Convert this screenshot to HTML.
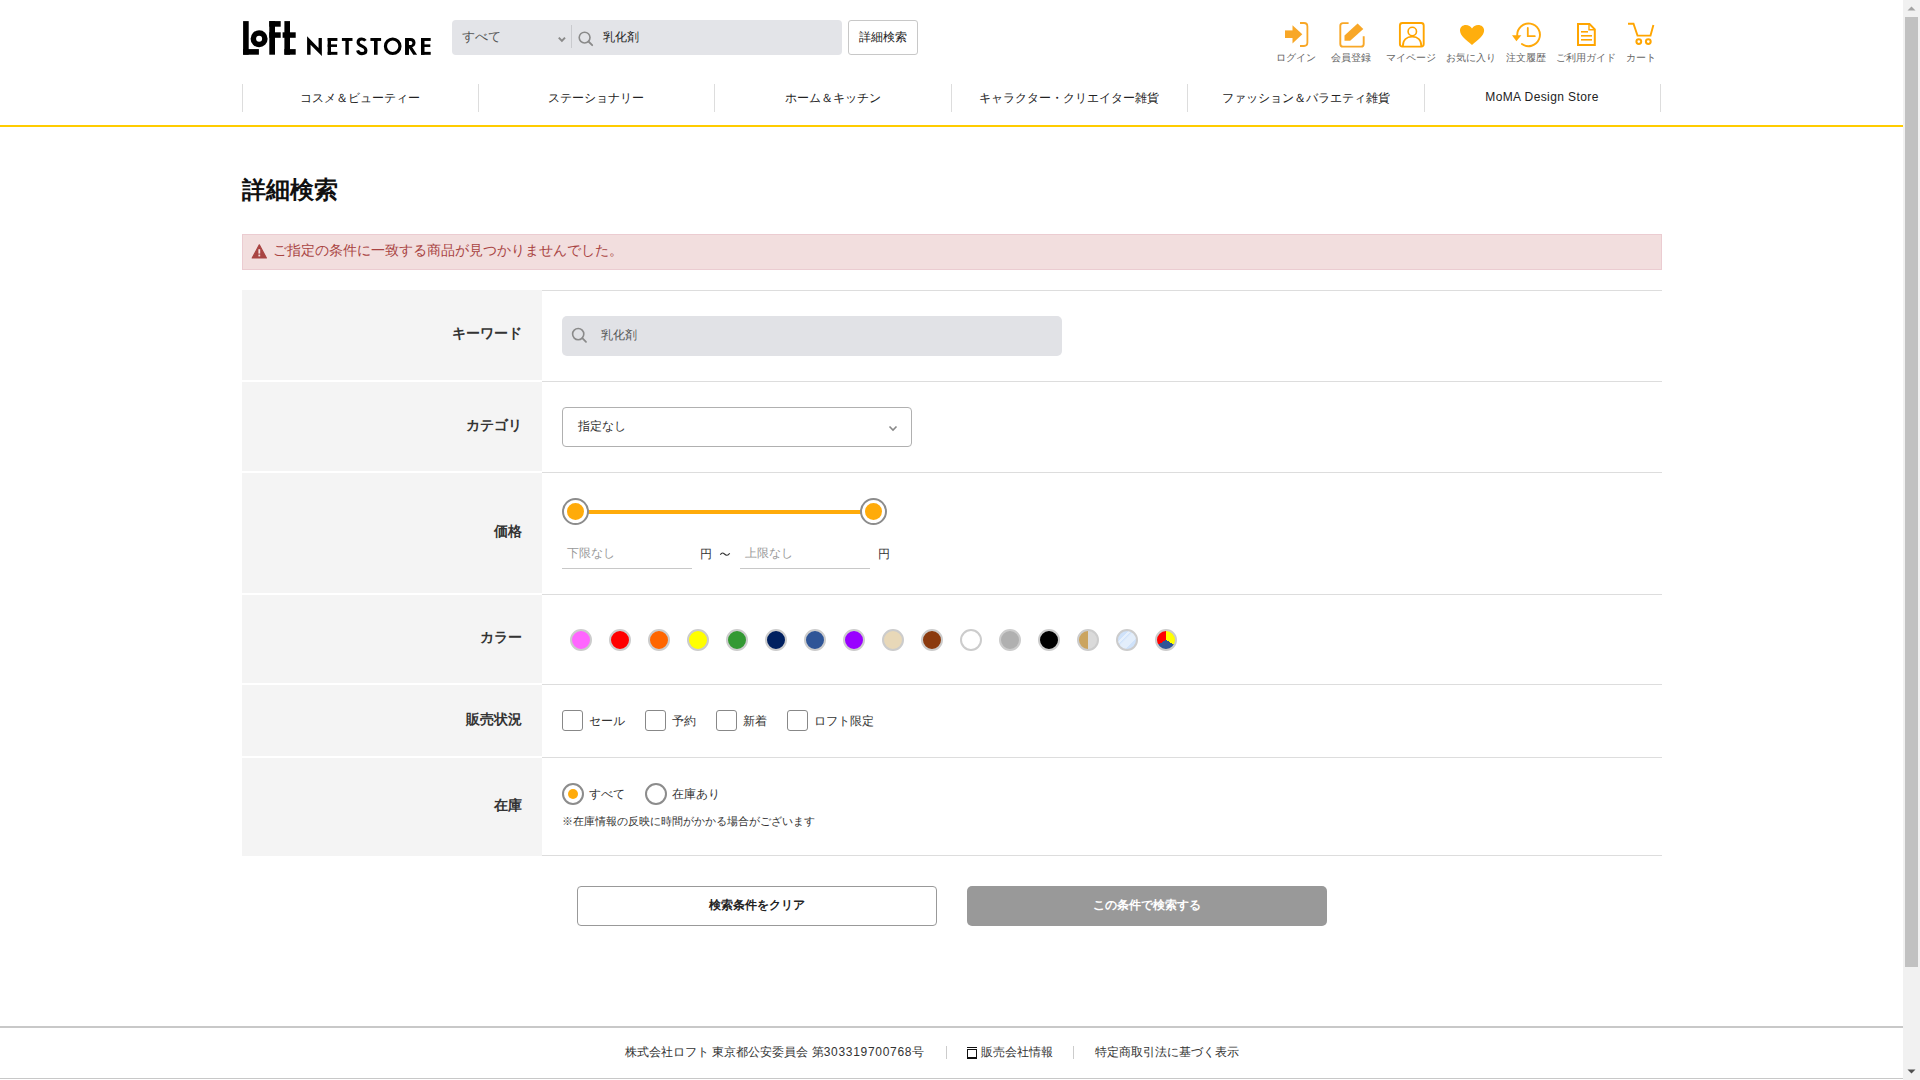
<!DOCTYPE html>
<html lang="ja">
<head>
<meta charset="utf-8">
<title>詳細検索 | ロフト公式通販サイト</title>
<style>
*{box-sizing:border-box;margin:0;padding:0}
html,body{width:1920px;height:1080px;overflow:hidden;background:#fff}
body{font-family:"Liberation Sans",sans-serif;color:#222;position:relative}
.abs{position:absolute}
.t{position:absolute;white-space:nowrap;line-height:1}
/* scrollbar */
#sb{position:absolute;left:1903px;top:0;width:17px;height:1080px;background:#f1f1f1}
#sb .thumb{position:absolute;left:2px;top:17px;width:13px;height:950px;background:#c1c1c1}
/* header */
.sbox{left:452px;top:20px;width:390px;height:35px;background:#e3e4e8;border-radius:4px}
.dbtn{left:848px;top:20px;width:70px;height:35px;border:1px solid #c8c8c8;border-radius:3px;background:#fff}
.icolbl{top:53px;font-size:10px;color:#666;text-align:center;width:80px}
.nav{top:84px;height:28px;width:1px;background:#ddd}
.navt{top:92px;font-size:12px;color:#222;text-align:center;width:236px}
.yline{left:0;top:125px;width:1903px;height:2px;background:#ffcc00}
/* table */
.lab{left:242px;width:300px;background:#f4f4f4}
.hl{left:542px;width:1120px;height:1px;background:#dddddd}
.lt{font-size:14px;font-weight:bold;color:#333;right:1398px;text-align:right}
.sw{position:absolute;top:629px;width:22px;height:22px;border-radius:50%;border:2px solid #cccccc}
.cb{position:absolute;top:710px;width:21px;height:21px;border:1px solid #888;border-radius:3px;background:#fff}
.ct{top:715px;font-size:12px;color:#333}
</style>
</head>
<body>
<!-- ===== HEADER ===== -->
<svg class="abs" style="left:0;top:0" width="440" height="70" viewBox="0 0 440 70">
  <g fill="#000">
    <rect x="243.1" y="21.1" width="5.6" height="33.6"/>
    <rect x="243.1" y="49.1" width="15.8" height="5.6"/>
    <circle cx="259.1" cy="38.8" r="8.5"/>
    <rect x="269.3" y="21.1" width="5.7" height="33.6"/>
    <rect x="269.3" y="21.1" width="11.4" height="5.6"/>
    <rect x="269.3" y="32.3" width="11.4" height="5.5"/>
    <rect x="284.4" y="21.1" width="5.6" height="33.6"/>
    <rect x="282.6" y="32.3" width="13.1" height="5.5"/>
    <rect x="284.4" y="49.1" width="11.3" height="5.6"/>
  </g>
  <circle cx="259.1" cy="38.8" r="3.0" fill="#fff"/>
  <g fill="#000">
    <polygon points="307.1,36.37 307.1,54.79 310.56,54.79 310.56,44.76 321.86,55.88 321.86,38.02 318.58,38.02 318.58,48.04"/>
    <rect x="327.7" y="38.02" width="3.3" height="16.77"/>
    <rect x="327.7" y="38.02" width="9.7" height="2.92"/>
    <rect x="327.7" y="44.4" width="9.3" height="2.55"/>
    <rect x="327.7" y="51.87" width="9.7" height="2.92"/>
    <rect x="341.9" y="38.02" width="10.6" height="2.92"/>
    <rect x="345.4" y="38.02" width="3.4" height="16.77"/>
    <rect x="370.4" y="38.02" width="10.7" height="2.92"/>
    <rect x="374" y="38.02" width="3.6" height="16.77"/>
    <rect x="405.2" y="38.02" width="3.6" height="16.77"/>
    <path fill-rule="evenodd" d="M405.2 38.02 H410.5 C413.6 38.02 415.5 40 415.5 42.7 C415.5 45 414.2 46.6 412.2 47.2 L417.1 54.79 H413.3 L408.9 47.9 V54.79 H405.2 Z M408.8 40.9 V45 H410.2 C411.6 45 412.4 44.1 412.4 42.95 C412.4 41.8 411.6 40.9 410.2 40.9 Z"/>
    <rect x="421" y="38.02" width="3.5" height="16.77"/>
    <rect x="421" y="38.02" width="9.7" height="2.92"/>
    <rect x="421" y="44.4" width="9.3" height="2.55"/>
    <rect x="421" y="51.87" width="9.7" height="2.92"/>
  </g>
  <path d="M365.4 40.8 C364.6 39.5 363.3 39 361.8 39 C359.6 39 358.1 40.4 358.1 42.3 C358.1 44.4 360 45.3 362 46.2 C364.3 47.2 365.9 48.4 365.9 50.5 C365.9 52.7 364.1 53.6 361.9 53.6 C359.6 53.6 358.1 52.3 357.6 50.3" fill="none" stroke="#000" stroke-width="3.1"/>
  <circle cx="392.7" cy="46.25" r="7.25" fill="none" stroke="#000" stroke-width="3.2"/>
</svg>

<div class="abs sbox"></div>
<div class="t" style="left:462px;top:31px;font-size:12.5px;color:#555">すべて</div>
<svg class="abs" style="left:556px;top:34px" width="12" height="10" viewBox="0 0 12 10"><path d="M2.8 3.6 L5.9 6.9 L9 3.6" fill="none" stroke="#8a8a8a" stroke-width="2"/></svg>
<div class="abs" style="left:571px;top:25px;width:1px;height:23px;background:#c9cace"></div>
<svg class="abs" style="left:576px;top:29px" width="20" height="20" viewBox="0 0 20 20"><circle cx="8.6" cy="8.6" r="5.4" fill="none" stroke="#8a8a8a" stroke-width="1.6"/><path d="M12.5 12.5 L16.2 16.2" stroke="#8a8a8a" stroke-width="1.8" stroke-linecap="round"/></svg>
<div class="t" style="left:603px;top:31px;font-size:12px;color:#222">乳化剤</div>

<div class="abs dbtn"></div>
<div class="t" style="left:859px;top:31px;font-size:12px;color:#222">詳細検索</div>

<!-- header icons -->
<svg class="abs" style="left:1270px;top:14px" width="400" height="40" viewBox="1270 14 400 40">
  <g fill="#f8a727">
    <rect x="1285" y="30.4" width="9" height="7.6"/>
    <polygon points="1292.5,25.2 1302.3,34.2 1292.5,43.5"/>
  </g>
  <path d="M1300 23 H1304 Q1307.4 23 1307.4 26.4 V42.6 Q1307.4 46 1304 46 H1300" fill="none" stroke="#f8a727" stroke-width="1.8"/>
  <path d="M1348.6 23.1 H1343 Q1340.3 23.1 1340.3 25.8 V43.9 Q1340.3 46.6 1343 46.6 H1361 Q1363.7 46.6 1363.7 43.9 V36.2" fill="none" stroke="#f8a727" stroke-width="1.9"/>
  <polygon points="1344.5,35.6 1357.6,23.4 1363.3,29 1350.2,40.7 1344.5,40.7" fill="#f8a727"/>
  <rect x="1399.9" y="23" width="23.8" height="23.6" rx="2.5" fill="none" stroke="#ffa500" stroke-width="1.9"/>
  <circle cx="1412.3" cy="31.5" r="4.2" fill="none" stroke="#ffa500" stroke-width="1.6"/>
  <path d="M1402.9 46 C1402.9 40 1406.6 36.6 1412.2 36.6 C1417.8 36.6 1421.3 40 1421.3 46" fill="none" stroke="#ffa500" stroke-width="1.8"/>
  <path d="M1472 44.9 C1466 40 1460 35.5 1460 30.5 C1460 27 1462.6 24.9 1465.8 24.9 C1468.6 24.9 1470.6 26.4 1472 28.4 C1473.4 26.4 1475.4 24.9 1478.2 24.9 C1481.4 24.9 1484.1 27 1484.1 30.5 C1484.1 35.5 1478 40 1472 44.9 Z" fill="#ffae0d"/>
  <path d="M1517.25 35.6 A11.35 11.35 0 1 1 1521.9 44" fill="none" stroke="#ffa90a" stroke-width="1.9" stroke-linecap="round"/>
  <polygon points="1512,35.2 1521.4,35.2 1516.4,41.2" fill="#ffa90a"/>
  <path d="M1527.8 28 V36.2 H1534.8" fill="none" stroke="#ffa90a" stroke-width="1.8" stroke-linecap="round"/>
  <path d="M1578 24 H1589.5 L1594.8 29.3 V44.9 H1578 Z" fill="none" stroke="#ffa500" stroke-width="2"/>
  <path d="M1589 24 V29.8 H1594.8" fill="none" stroke="#ffa500" stroke-width="1.4"/>
  <rect x="1581" y="31" width="7" height="1.6" fill="#ffa500"/>
  <rect x="1581" y="35" width="11" height="1.6" fill="#ffa500"/>
  <rect x="1581" y="39" width="11" height="1.6" fill="#ffa500"/>
  <path d="M1628 23.8 H1633.5 L1637.5 35.6 H1650.5 L1653.4 25" fill="none" stroke="#ffa500" stroke-width="1.9"/>
  <circle cx="1638.8" cy="41.6" r="2.4" fill="none" stroke="#ffa500" stroke-width="2"/>
  <circle cx="1648.3" cy="41.6" r="2.4" fill="none" stroke="#ffa500" stroke-width="2"/>
</svg>
<div class="t icolbl" style="left:1256px">ログイン</div>
<div class="t icolbl" style="left:1311px">会員登録</div>
<div class="t icolbl" style="left:1371px">マイページ</div>
<div class="t icolbl" style="left:1431px">お気に入り</div>
<div class="t icolbl" style="left:1486px">注文履歴</div>
<div class="t icolbl" style="left:1546px">ご利用ガイド</div>
<div class="t icolbl" style="left:1601px">カート</div>

<!-- nav -->
<div class="abs nav" style="left:242px"></div>
<div class="abs nav" style="left:478px"></div>
<div class="abs nav" style="left:714px"></div>
<div class="abs nav" style="left:951px"></div>
<div class="abs nav" style="left:1187px"></div>
<div class="abs nav" style="left:1424px"></div>
<div class="abs nav" style="left:1660px"></div>
<div class="t navt" style="left:242px">コスメ＆ビューティー</div>
<div class="t navt" style="left:478px">ステーショナリー</div>
<div class="t navt" style="left:715px">ホーム＆キッチン</div>
<div class="t navt" style="left:951px">キャラクター・クリエイター雑貨</div>
<div class="t navt" style="left:1188px">ファッション＆バラエティ雑貨</div>
<div class="t navt" style="left:1424px;top:91px;letter-spacing:0.4px">MoMA Design Store</div>
<div class="abs yline"></div>

<!-- ===== MAIN ===== -->
<div class="t" style="left:242px;top:178px;font-size:24px;font-weight:bold;color:#111">詳細検索</div>

<div class="abs" style="left:242px;top:234px;width:1420px;height:36px;background:#f2dede;border:1px solid #ebccd1"></div>
<svg class="abs" style="left:250px;top:242px" width="20" height="20" viewBox="0 0 20 20"><path d="M9.3 2.8 L16.4 16 H2.2 Z" fill="#a94442" stroke="#a94442" stroke-width="1.2" stroke-linejoin="round"/><rect x="8.4" y="7.2" width="1.8" height="4.4" fill="#f2dede"/><rect x="8.4" y="12.6" width="1.8" height="1.8" fill="#f2dede"/></svg>
<div class="t" style="left:273px;top:243px;font-size:14px;color:#a94442">ご指定の条件に一致する商品が見つかりませんでした。</div>

<!-- table backgrounds -->
<div class="abs lab" style="top:290px;height:90px"></div>
<div class="abs lab" style="top:382px;height:89px"></div>
<div class="abs lab" style="top:473px;height:120px"></div>
<div class="abs lab" style="top:595px;height:88px"></div>
<div class="abs lab" style="top:685px;height:71px"></div>
<div class="abs lab" style="top:758px;height:98px"></div>
<div class="abs hl" style="top:290px"></div>
<div class="abs hl" style="top:381px"></div>
<div class="abs hl" style="top:472px"></div>
<div class="abs hl" style="top:594px"></div>
<div class="abs hl" style="top:684px"></div>
<div class="abs hl" style="top:757px"></div>
<div class="abs hl" style="top:855px"></div>

<div class="t lt" style="top:326px">キーワード</div>
<div class="t lt" style="top:418px">カテゴリ</div>
<div class="t lt" style="top:524px">価格</div>
<div class="t lt" style="top:630px">カラー</div>
<div class="t lt" style="top:712px">販売状況</div>
<div class="t lt" style="top:798px">在庫</div>

<!-- keyword -->
<div class="abs" style="left:562px;top:316px;width:500px;height:40px;background:#e1e2e6;border-radius:5px"></div>
<svg class="abs" style="left:566px;top:322px" width="24" height="24" viewBox="0 0 24 24"><circle cx="12.2" cy="12.1" r="5.6" fill="none" stroke="#8a8a8a" stroke-width="1.6"/><path d="M16.3 16.2 L20 19.9" stroke="#8a8a8a" stroke-width="1.8" stroke-linecap="round"/></svg>
<div class="t" style="left:601px;top:329px;font-size:12px;color:#555">乳化剤</div>

<!-- category -->
<div class="abs" style="left:562px;top:407px;width:350px;height:40px;border:1px solid #b0b0b0;border-radius:4px;background:#fff"></div>
<div class="t" style="left:578px;top:420px;font-size:12px;color:#333">指定なし</div>
<svg class="abs" style="left:886px;top:423px" width="14" height="10" viewBox="0 0 14 10"><path d="M3.5 3.5 L7 7 L10.5 3.5" fill="none" stroke="#888" stroke-width="1.6"/></svg>

<!-- price slider -->
<div class="abs" style="left:588px;top:510px;width:273px;height:4px;background:#ffab0a"></div>
<div class="abs" style="left:562px;top:498px;width:27px;height:27px;border-radius:50%;border:2px solid #8c8c8c;background:#fff"></div>
<div class="abs" style="left:567px;top:503px;width:17px;height:17px;border-radius:50%;background:#ffab0a"></div>
<div class="abs" style="left:860px;top:498px;width:27px;height:27px;border-radius:50%;border:2px solid #8c8c8c;background:#fff"></div>
<div class="abs" style="left:865px;top:503px;width:17px;height:17px;border-radius:50%;background:#ffab0a"></div>
<div class="t" style="left:567px;top:547px;font-size:12px;color:#999">下限なし</div>
<div class="abs" style="left:562px;top:568px;width:130px;height:1px;background:#c8c8c8"></div>
<div class="t" style="left:700px;top:548px;font-size:12px;color:#333">円</div>
<svg class="abs" style="left:718px;top:548px" width="14" height="12" viewBox="0 0 14 12"><path d="M2.3 6.8 C3.2 5.2 4.3 4.6 5.4 5.2 C6.4 5.8 7.4 6.9 8.6 7.2 C9.8 7.5 10.8 6.6 11.7 5.2" fill="none" stroke="#333" stroke-width="1.1"/></svg>
<div class="t" style="left:745px;top:547px;font-size:12px;color:#999">上限なし</div>
<div class="abs" style="left:740px;top:568px;width:130px;height:1px;background:#c8c8c8"></div>
<div class="t" style="left:878px;top:548px;font-size:12px;color:#333">円</div>

<!-- colors -->
<div class="sw" style="left:570px;background:#ff66ff"></div>
<div class="sw" style="left:609px;background:#ff0000"></div>
<div class="sw" style="left:648px;background:#ff6600"></div>
<div class="sw" style="left:687px;background:#ffff00"></div>
<div class="sw" style="left:726px;background:#339933"></div>
<div class="sw" style="left:765px;background:#002060"></div>
<div class="sw" style="left:804px;background:#2f5597"></div>
<div class="sw" style="left:843px;background:#9900ff"></div>
<div class="sw" style="left:882px;background:#e8d8b8"></div>
<div class="sw" style="left:921px;background:#8b3a0e"></div>
<div class="sw" style="left:960px;background:#ffffff"></div>
<div class="sw" style="left:999px;background:#b0b0b0"></div>
<div class="sw" style="left:1038px;background:#000000"></div>
<div class="sw" style="left:1077px;background:linear-gradient(90deg,#cba45f 50%,#dadada 50%)"></div>
<div class="sw" style="left:1116px;background:linear-gradient(135deg,#cfe2fa 0,#cfe2fa 30%,#e6f0fc 30%,#e6f0fc 38%,#cfe2fa 38%,#e3eefb 46%,#e3eefb 70%,#cfe2fa 70%)"></div>
<div class="sw" style="left:1155px;background:conic-gradient(#ffff00 0 120deg,#2f5597 120deg 240deg,#ff0000 240deg 360deg)"></div>

<!-- sale status -->
<div class="cb" style="left:562px"></div><div class="t ct" style="left:589px">セール</div>
<div class="cb" style="left:645px"></div><div class="t ct" style="left:672px">予約</div>
<div class="cb" style="left:716px"></div><div class="t ct" style="left:743px">新着</div>
<div class="cb" style="left:787px"></div><div class="t ct" style="left:814px">ロフト限定</div>

<!-- stock -->
<div class="abs" style="left:562px;top:783px;width:22px;height:22px;border-radius:50%;border:2px solid #8c8c8c;background:#fff"></div>
<div class="abs" style="left:568px;top:789px;width:10px;height:10px;border-radius:50%;background:#ffab0a"></div>
<div class="t" style="left:589px;top:788px;font-size:12px;color:#333">すべて</div>
<div class="abs" style="left:645px;top:783px;width:22px;height:22px;border-radius:50%;border:2px solid #8c8c8c;background:#fff"></div>
<div class="t" style="left:672px;top:788px;font-size:12px;color:#333">在庫あり</div>
<div class="t" style="left:562px;top:816px;font-size:11px;color:#333">※在庫情報の反映に時間がかかる場合がございます</div>

<!-- buttons -->
<div class="abs" style="left:577px;top:886px;width:360px;height:40px;border:1px solid #999;border-radius:4px;background:#fff"></div>
<div class="t" style="left:577px;top:899px;width:360px;text-align:center;font-size:12px;font-weight:bold;color:#222">検索条件をクリア</div>
<div class="abs" style="left:967px;top:886px;width:360px;height:40px;border-radius:5px;background:#999"></div>
<div class="t" style="left:967px;top:899px;width:360px;text-align:center;font-size:12px;font-weight:bold;color:#fff">この条件で検索する</div>

<!-- footer -->
<div class="abs" style="left:0;top:1026px;width:1903px;height:2px;background:#c8c8c8"></div>
<div class="t" style="left:625px;top:1046px;font-size:12px;color:#333">株式会社ロフト 東京都公安委員会 第<span style="letter-spacing:0.7px">303319700768</span>号</div>
<div class="abs" style="left:946px;top:1046px;width:1px;height:13px;background:#ccc"></div>
<div class="abs" style="left:967px;top:1047px;width:10px;height:1px;background:#111"></div><div class="abs" style="left:967px;top:1049px;width:10px;height:10px;border:1px solid #111;border-bottom-width:2px"></div>
<div class="t" style="left:981px;top:1046px;font-size:12px;color:#333">販売会社情報</div>
<div class="abs" style="left:1073px;top:1046px;width:1px;height:13px;background:#ccc"></div>
<div class="t" style="left:1095px;top:1046px;font-size:12px;color:#333">特定商取引法に基づく表示</div>
<div class="abs" style="left:0;top:1078px;width:1903px;height:1px;background:#c8c8c8"></div>

<!-- scrollbar -->
<div id="sb"><div class="thumb"></div>
<svg class="abs" style="left:0;top:0" width="17" height="17" viewBox="0 0 17 17"><path d="M4.5 10.5 L8.5 6.5 L12.5 10.5 Z" fill="#a3a3a3"/></svg>
<svg class="abs" style="left:0;top:1063px" width="17" height="17" viewBox="0 0 17 17"><path d="M4.5 6.5 L8.5 10.5 L12.5 6.5 Z" fill="#505050"/></svg>
</div>
</body>
</html>
